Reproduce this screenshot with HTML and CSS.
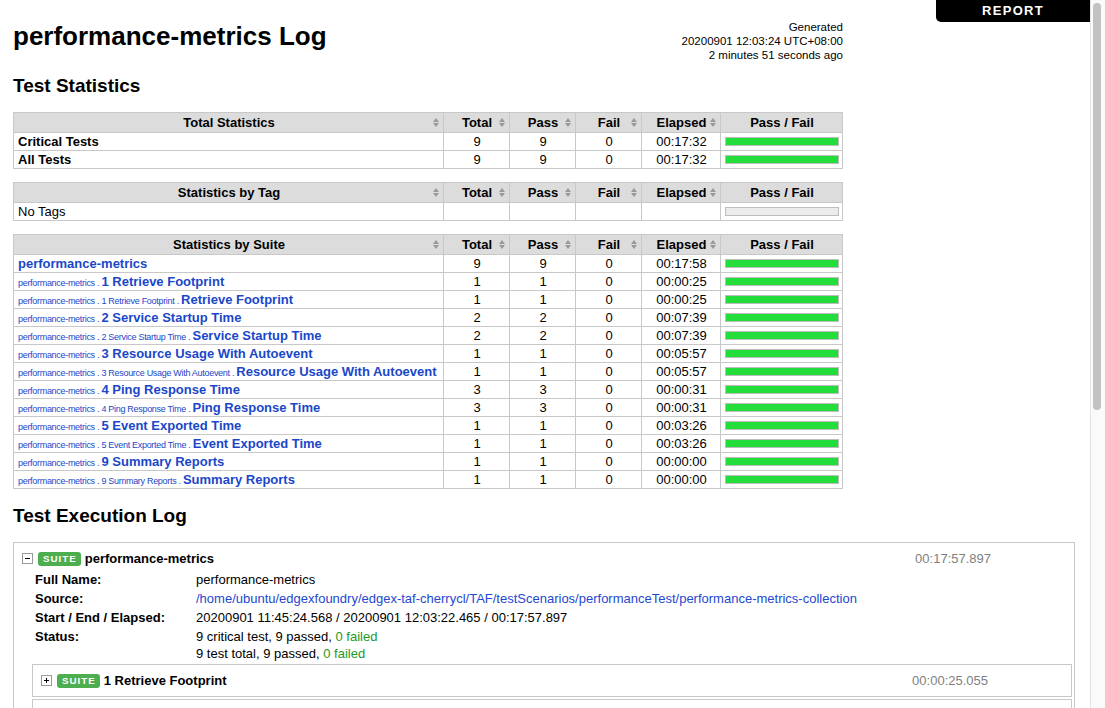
FILE: index.html
```html
<!DOCTYPE html>
<html lang="en">
<head>
<meta charset="utf-8">
<title>performance-metrics Log</title>
<link rel="stylesheet" href="styles.css">
</head>
<body>
<div class="viewport">
  <div class="page">
    <div class="report-link"><a href="#">REPORT</a></div>

    <div class="header">
      <h1>performance-metrics Log</h1>
      <div class="generated">Generated<br>20200901 12:03:24 UTC+08:00<br>2 minutes 51 seconds ago</div>
    </div>

    <h2 class="section-title">Test Statistics</h2>

    <table class="statistics">
      <colgroup><col class="c-name"><col class="c-stat"><col class="c-stat"><col class="c-stat"><col class="c-elapsed"><col class="c-graph"></colgroup>
      <tr>
        <th><div class="th-inner"><span></span><span>Total Statistics</span><span class="sort"></span></div></th>
        <th><div class="th-inner"><span></span><span>Total</span><span class="sort"></span></div></th>
        <th><div class="th-inner"><span></span><span>Pass</span><span class="sort"></span></div></th>
        <th><div class="th-inner"><span></span><span>Fail</span><span class="sort"></span></div></th>
        <th><div class="th-inner"><span></span><span>Elapsed</span><span class="sort"></span></div></th>
        <th>Pass / Fail</th>
      </tr>
      <tr><td class="stat-name"><span class="strong">Critical Tests</span></td><td class="num">9</td><td class="num">9</td><td class="num">0</td><td class="num">00:17:32</td><td class="graph-cell"><div class="graph"><div class="pass-bar"></div></div></td></tr>
      <tr><td class="stat-name"><span class="strong">All Tests</span></td><td class="num">9</td><td class="num">9</td><td class="num">0</td><td class="num">00:17:32</td><td class="graph-cell"><div class="graph"><div class="pass-bar"></div></div></td></tr>
    </table>

    <table class="statistics">
      <colgroup><col class="c-name"><col class="c-stat"><col class="c-stat"><col class="c-stat"><col class="c-elapsed"><col class="c-graph"></colgroup>
      <tr>
        <th><div class="th-inner"><span></span><span>Statistics by Tag</span><span class="sort"></span></div></th>
        <th><div class="th-inner"><span></span><span>Total</span><span class="sort"></span></div></th>
        <th><div class="th-inner"><span></span><span>Pass</span><span class="sort"></span></div></th>
        <th><div class="th-inner"><span></span><span>Fail</span><span class="sort"></span></div></th>
        <th><div class="th-inner"><span></span><span>Elapsed</span><span class="sort"></span></div></th>
        <th>Pass / Fail</th>
      </tr>
      <tr><td class="stat-name">No Tags</td><td></td><td></td><td></td><td></td><td class="graph-cell"><div class="graph empty"></div></td></tr>
    </table>

    <table class="statistics">
      <colgroup><col class="c-name"><col class="c-stat"><col class="c-stat"><col class="c-stat"><col class="c-elapsed"><col class="c-graph"></colgroup>
      <tr>
        <th><div class="th-inner"><span></span><span>Statistics by Suite</span><span class="sort"></span></div></th>
        <th><div class="th-inner"><span></span><span>Total</span><span class="sort"></span></div></th>
        <th><div class="th-inner"><span></span><span>Pass</span><span class="sort"></span></div></th>
        <th><div class="th-inner"><span></span><span>Fail</span><span class="sort"></span></div></th>
        <th><div class="th-inner"><span></span><span>Elapsed</span><span class="sort"></span></div></th>
        <th>Pass / Fail</th>
      </tr>
      <tr><td class="stat-name"><a href="#">performance-metrics</a></td><td class="num">9</td><td class="num">9</td><td class="num">0</td><td class="num">00:17:58</td><td class="graph-cell"><div class="graph"><div class="pass-bar"></div></div></td></tr>
      <tr><td class="stat-name"><span class="parent-name">performance-metrics . </span><a href="#">1 Retrieve Footprint</a></td><td class="num">1</td><td class="num">1</td><td class="num">0</td><td class="num">00:00:25</td><td class="graph-cell"><div class="graph"><div class="pass-bar"></div></div></td></tr>
      <tr><td class="stat-name"><span class="parent-name">performance-metrics . 1 Retrieve Footprint . </span><a href="#">Retrieve Footprint</a></td><td class="num">1</td><td class="num">1</td><td class="num">0</td><td class="num">00:00:25</td><td class="graph-cell"><div class="graph"><div class="pass-bar"></div></div></td></tr>
      <tr><td class="stat-name"><span class="parent-name">performance-metrics . </span><a href="#">2 Service Startup Time</a></td><td class="num">2</td><td class="num">2</td><td class="num">0</td><td class="num">00:07:39</td><td class="graph-cell"><div class="graph"><div class="pass-bar"></div></div></td></tr>
      <tr><td class="stat-name"><span class="parent-name">performance-metrics . 2 Service Startup Time . </span><a href="#">Service Startup Time</a></td><td class="num">2</td><td class="num">2</td><td class="num">0</td><td class="num">00:07:39</td><td class="graph-cell"><div class="graph"><div class="pass-bar"></div></div></td></tr>
      <tr><td class="stat-name"><span class="parent-name">performance-metrics . </span><a href="#">3 Resource Usage With Autoevent</a></td><td class="num">1</td><td class="num">1</td><td class="num">0</td><td class="num">00:05:57</td><td class="graph-cell"><div class="graph"><div class="pass-bar"></div></div></td></tr>
      <tr><td class="stat-name"><span class="parent-name">performance-metrics . 3 Resource Usage With Autoevent . </span><a href="#">Resource Usage With Autoevent</a></td><td class="num">1</td><td class="num">1</td><td class="num">0</td><td class="num">00:05:57</td><td class="graph-cell"><div class="graph"><div class="pass-bar"></div></div></td></tr>
      <tr><td class="stat-name"><span class="parent-name">performance-metrics . </span><a href="#">4 Ping Response Time</a></td><td class="num">3</td><td class="num">3</td><td class="num">0</td><td class="num">00:00:31</td><td class="graph-cell"><div class="graph"><div class="pass-bar"></div></div></td></tr>
      <tr><td class="stat-name"><span class="parent-name">performance-metrics . 4 Ping Response Time . </span><a href="#">Ping Response Time</a></td><td class="num">3</td><td class="num">3</td><td class="num">0</td><td class="num">00:00:31</td><td class="graph-cell"><div class="graph"><div class="pass-bar"></div></div></td></tr>
      <tr><td class="stat-name"><span class="parent-name">performance-metrics . </span><a href="#">5 Event Exported Time</a></td><td class="num">1</td><td class="num">1</td><td class="num">0</td><td class="num">00:03:26</td><td class="graph-cell"><div class="graph"><div class="pass-bar"></div></div></td></tr>
      <tr><td class="stat-name"><span class="parent-name">performance-metrics . 5 Event Exported Time . </span><a href="#">Event Exported Time</a></td><td class="num">1</td><td class="num">1</td><td class="num">0</td><td class="num">00:03:26</td><td class="graph-cell"><div class="graph"><div class="pass-bar"></div></div></td></tr>
      <tr><td class="stat-name"><span class="parent-name">performance-metrics . </span><a href="#">9 Summary Reports</a></td><td class="num">1</td><td class="num">1</td><td class="num">0</td><td class="num">00:00:00</td><td class="graph-cell"><div class="graph"><div class="pass-bar"></div></div></td></tr>
      <tr><td class="stat-name"><span class="parent-name">performance-metrics . 9 Summary Reports . </span><a href="#">Summary Reports</a></td><td class="num">1</td><td class="num">1</td><td class="num">0</td><td class="num">00:00:00</td><td class="graph-cell"><div class="graph"><div class="pass-bar"></div></div></td></tr>
    </table>

    <h2 class="section-title log-title">Test Execution Log</h2>

    <div class="suite">
      <div class="element-header">
        <svg class="toggle" width="11" height="11" viewBox="0 0 11 11"><rect x="0.5" y="0.5" width="10" height="10" fill="#fff" stroke="#9a9a9a"/><path d="M3 5h5v1H3z" fill="#000"/></svg>
        <span class="label">SUITE</span>
        <span class="element-name">performance-metrics</span>
        <span class="elapsed">00:17:57.897</span>
      </div>
      <div class="children">
        <table class="metadata">
          <tr><th>Full Name:</th><td>performance-metrics</td></tr>
          <tr><th>Source:</th><td><a class="plain-link" href="#">/home/ubuntu/edgexfoundry/edgex-taf-cherrycl/TAF/testScenarios/performanceTest/performance-metrics-collection</a></td></tr>
          <tr><th>Start / End / Elapsed:</th><td>20200901 11:45:24.568 / 20200901 12:03:22.465 / 00:17:57.897</td></tr>
          <tr><th>Status:</th><td>9 critical test, 9 passed, <span class="pass">0 failed</span><br>9 test total, 9 passed, <span class="pass">0 failed</span></td></tr>
        </table>

        <div class="suite child-suite">
          <div class="element-header">
            <svg class="toggle" width="11" height="11" viewBox="0 0 11 11"><rect x="0.5" y="0.5" width="10" height="10" fill="#fff" stroke="#9a9a9a"/><path d="M3 5h5v1H3zM5 3h1v5H5z" fill="#000"/></svg>
            <span class="label">SUITE</span>
            <span class="element-name">1 Retrieve Footprint</span>
            <span class="elapsed">00:00:25.055</span>
          </div>
        </div>
        <div class="suite child-suite">
          <div class="element-header">
            <svg class="toggle" width="11" height="11" viewBox="0 0 11 11"><rect x="0.5" y="0.5" width="10" height="10" fill="#fff" stroke="#9a9a9a"/><path d="M3 5h5v1H3zM5 3h1v5H5z" fill="#000"/></svg>
            <span class="label">SUITE</span>
            <span class="element-name">2 Service Startup Time</span>
            <span class="elapsed">00:07:38.672</span>
          </div>
        </div>
      </div>
    </div>
  </div>
  <div class="scrollbar"><div class="scrollbar-thumb"></div></div>
</div>
</body>
</html>
```

FILE: styles.css
```css
html, body {
  margin: 0;
  padding: 0;
}

body {
  font-family: "Liberation Sans", Arial, Helvetica, sans-serif;
  font-size: 13px;
  color: #000;
  background: #fff;
}

a {
  color: #1a47c9;
  text-decoration: none;
}

.viewport {
  display: flex;
  height: 708px;
  overflow: hidden;
}

.page {
  position: relative;
  flex: 1;
  min-width: 0;
  padding: 0 15px 0 13px;
  overflow: hidden;
}

.scrollbar {
  box-sizing: border-box;
  flex: none;
  width: 15px;
  border-left: 1px solid #e4e4e4;
  background: #fafafa;
  padding: 3px 4px 0 2px;
}

.scrollbar-thumb {
  height: 407px;
  border-radius: 4px;
  background: #c2c2c2;
}

/* top right report link */
.report-link {
  position: absolute;
  top: 0;
  right: 0;
  width: 154px;
  height: 22px;
  background: #000;
  border-bottom-left-radius: 5px;
  text-align: center;
  line-height: 22px;
}

.report-link a {
  color: #fff;
  font-weight: bold;
  letter-spacing: 1.3px;
}

/* header */
.header {
  width: 830px;
  display: flex;
  justify-content: space-between;
  align-items: flex-start;
  padding-top: 20px;
}

.header h1 {
  margin: 1px 0 0;
  font-size: 26px;
  line-height: 30px;
}

.generated {
  font-size: 11.5px;
  line-height: 14px;
  text-align: right;
  white-space: nowrap;
}

.section-title {
  margin: 13px 0 15px;
  font-size: 19px;
  line-height: 22px;
}

.section-title.log-title {
  margin-top: 16px;
  margin-bottom: 15px;
}

/* statistics tables */
.statistics {
  width: 829px;
  table-layout: fixed;
  border-collapse: collapse;
  margin-bottom: 13px;
}

.c-name { width: 430px; }
.c-stat { width: 66px; }
.c-elapsed { width: 79px; }
.c-graph { width: 122px; }

.statistics th,
.statistics td {
  border: 1px solid #c8c8c8;
  padding: 0 3px 0 4px;
  vertical-align: middle;
}

.statistics th {
  background: #dcdcdc;
  font-weight: bold;
  line-height: 19px;
  text-align: center;
  white-space: nowrap;
}

.statistics td {
  line-height: 17px;
  height: 17px;
}

.th-inner {
  display: grid;
  grid-template-columns: 1fr auto 1fr;
  align-items: center;
}

.sort {
  justify-self: end;
  display: flex;
  flex-direction: column;
  gap: 1px;
  margin-right: 1px;
}

.sort::before,
.sort::after {
  content: "";
  border-left: 3px solid transparent;
  border-right: 3px solid transparent;
}

.sort::before {
  border-bottom: 4px solid #999;
}

.sort::after {
  border-top: 4px solid #999;
}

.num {
  text-align: center;
}

.stat-name {
  white-space: nowrap;
  overflow: hidden;
}

.stat-name a,
.stat-name .strong {
  font-weight: bold;
}

.parent-name {
  font-size: 9px;
  line-height: 10px;
  letter-spacing: -0.3px;
  color: #1a47c9;
}

.graph-cell {
  padding: 0 4px 0 4px;
}

.graph {
  height: 7px;
  border: 1px solid #bdbdbd;
  background: #f2f2f2;
}

.graph.empty {
  background: #ececec;
}

.pass-bar {
  height: 100%;
  background: #22dd3a;
}

/* execution log */
.suite {
  border: 1px solid #c8c8c8;
  padding: 3px 2px 3px 3px;
}

.element-header {
  display: flex;
  align-items: center;
  height: 25px;
  padding-left: 5px;
  white-space: nowrap;
}

.toggle {
  flex: none;
  margin-right: 5px;
}

.label {
  background: #4cae4f;
  color: #fff;
  font-weight: bold;
  font-size: 9.75px;
  letter-spacing: 1px;
  line-height: 14px;
  padding: 0 4px 0 5px;
  border-radius: 3px;
  margin-right: 4px;
}

.element-name {
  font-weight: bold;
}

.elapsed {
  margin-left: auto;
  margin-right: 81px;
  color: #808080;
}

.children {
  margin-left: 15px;
}

.metadata {
  margin-left: 3px;
  border-collapse: collapse;
}

.metadata th {
  width: 161px;
  text-align: left;
  vertical-align: top;
  font-weight: bold;
  padding: 0 0 2px;
  line-height: 17px;
}

.metadata td {
  padding: 0 0 2px;
  line-height: 17px;
  vertical-align: top;
}

.plain-link {
  color: #2448d0;
}

.pass {
  color: #229922;
}

.child-suite {
  margin-bottom: 2px;
}
```
